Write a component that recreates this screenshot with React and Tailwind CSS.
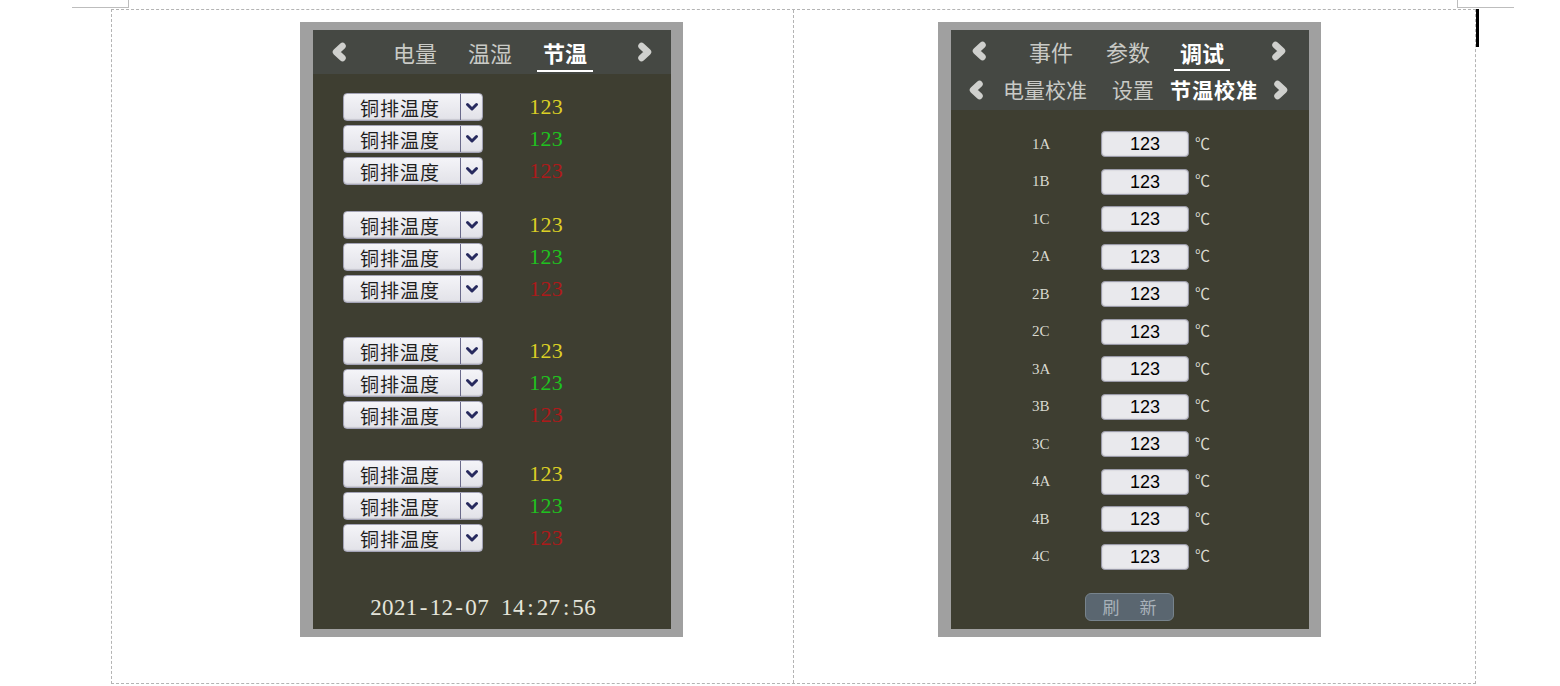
const cjk = { fontFamily: '"Noto Sans CJK SC", "Noto Sans", sans-serif' };
const serif = { fontFamily: '"Liberation Serif", "Noto Sans CJK SC", serif' };
const sans = { fontFamily: '"Liberation Sans", Arial, sans-serif' };

const Chevron = ({ dir = "left" }) => (
  <svg width="16" height="20" viewBox="0 0 16 20" className="shrink-0">
    <path
      d={dir === "left" ? "M11.5 4 L5 10 L11.5 16" : "M4.5 4 L11 10 L4.5 16"}
      fill="none"
      stroke="#cfd0cd"
      strokeWidth="6.5"
      strokeLinecap="round"
      strokeLinejoin="round"
    />
  </svg>
);

const DownArrow = () => (
  <svg width="14" height="10" viewBox="0 0 14 10">
    <path d="M2.5 2.5 L7 7 L11.5 2.5" fill="none" stroke="#272a5e" strokeWidth="3" strokeLinecap="round" strokeLinejoin="round" />
  </svg>
);

// fixed-width characters, like the half-width digits of the device font
const Mono = ({ text, w }) => (
  <span className="inline-flex">
    {text.split("").map((c, i) => (
      <span key={i} className="inline-block text-center" style={{ width: w }}>
        {c}
      </span>
    ))}
  </span>
);

const Dropdown = ({ value, color }) => (
  <div className="flex items-center h-[28px]">
    <div className="flex h-[28px] w-[140px] rounded-[4px] border border-[#a3a3b6] bg-gradient-to-b from-[#f4f4f8] to-[#e2e2e8] shadow-[inset_0_-1px_1px_#c8c8d0]">
      <div className="flex-1 flex items-center pl-[16px] text-[19px] leading-none text-[#1e1e1e] tracking-[1px]" style={cjk}>
        铜排温度
      </div>
      <div className="w-[22px] border-l border-[#6a6a8a] flex items-center justify-center">
        <DownArrow />
      </div>
    </div>
    <div className="ml-[46px] text-[22px] leading-none" style={{ ...serif, color }}>
      <Mono text={value} w="11.3px" />
    </div>
  </div>
);

const Group = ({ className = "" }) => (
  <div className={"flex flex-col gap-[4px] " + className}>
    <Dropdown value="123" color="#dccf25" />
    <Dropdown value="123" color="#1fc21f" />
    <Dropdown value="123" color="#ad1a1a" />
  </div>
);

const Panel = ({ children }) => (
  <div className="w-[383px] h-[615px] bg-[#a0a0a0] pl-[13px] pr-[12px] py-[8px]">
    <div className="w-[358px] h-[599px] bg-[#3e3e31] flex flex-col">{children}</div>
  </div>
);

const ActiveTab = ({ label, width, pt = "10px", gap = "6px" }) => (
  <div className="flex flex-col items-center h-full shrink-0" style={{ width, paddingTop: pt }}>
    <span className="text-[22px] leading-[24px] text-white font-bold" style={cjk}>
      {label}
    </span>
    <div className="w-full h-[2px] bg-white" style={{ marginTop: gap }} />
  </div>
);

const LeftPanel = () => (
  <Panel>
    <div className="h-[44px] bg-[#454843] flex items-stretch">
      <div className="flex items-center pl-[18px]">
        <Chevron dir="left" />
      </div>
      <div className="flex items-center ml-[46px] text-[22px] text-[#c9cac6]" style={cjk}>
        电量
      </div>
      <div className="flex items-center ml-[31px] text-[22px] text-[#c9cac6]" style={cjk}>
        温湿
      </div>
      <div className="ml-[25px]">
        <ActiveTab label="节温" width="56px" />
      </div>
      <div className="flex items-center ml-[44px]">
        <Chevron dir="right" />
      </div>
    </div>

    <div className="pl-[30px] pt-[19px]">
      <Group />
      <Group className="mt-[26px]" />
      <Group className="mt-[34px]" />
      <Group className="mt-[31px]" />
    </div>

    <div className="mt-auto pl-[57px] pb-[7px] text-[23px] leading-[28px] text-[#e4e4da]" style={serif}>
      <Mono text="2021-12-07 14:27:56" w="11.9px" />
    </div>
  </Panel>
);

const rows = ["1A", "1B", "1C", "2A", "2B", "2C", "3A", "3B", "3C", "4A", "4B", "4C"];

const RightPanel = () => (
  <Panel>
    <div className="h-[80px] bg-[#454843] flex flex-col">
      <div className="h-[42px] flex items-stretch">
        <div className="flex items-center pl-[20px]">
          <Chevron dir="left" />
        </div>
        <div className="flex items-center ml-[42px] text-[22px] text-[#c9cac6]" style={cjk}>
          事件
        </div>
        <div className="flex items-center ml-[33px] text-[22px] text-[#c9cac6]" style={cjk}>
          参数
        </div>
        <div className="ml-[24px]">
          <ActiveTab label="调试" width="56px" pt="10px" gap="5px" />
        </div>
        <div className="flex items-center ml-[41px]">
          <Chevron dir="right" />
        </div>
      </div>
      <div className="h-[38px] flex items-center pb-[2px]">
        <div className="pl-[17px]">
          <Chevron dir="left" />
        </div>
        <span className="ml-[19px] text-[21px] text-[#c9cac6]" style={cjk}>
          电量校准
        </span>
        <span className="ml-[25px] text-[21px] text-[#c9cac6]" style={cjk}>
          设置
        </span>
        <span className="ml-[16px] text-[21px] text-white font-bold tracking-[1px]" style={cjk}>
          节温校准
        </span>
        <div className="ml-[15px]">
          <Chevron dir="right" />
        </div>
      </div>
    </div>

    <div className="pt-[21px] flex flex-col gap-[11.5px]">
      {rows.map((r) => (
        <div key={r} className="flex items-center h-[26px]">
          <div className="w-[150px] pl-[81px] text-[15px] text-[#d9d9d0]" style={serif}>
            {r}
          </div>
          <div
            className="w-[88px] h-[26px] rounded-[4px] border border-[#9a9aa8] bg-[#e9e9ed] shadow-[inset_0_0_2px_#b8b8c4] flex items-center justify-center text-[18px] leading-none text-black"
            style={sans}
          >
            123
          </div>
          <div className="ml-[6px] text-[15px] text-[#d9d9d0]" style={serif}>
            ℃
          </div>
        </div>
      ))}
    </div>

    <div className="pl-[134px] mt-[23px]">
      <div className="w-[89px] h-[28px] rounded-[6px] border border-[#77838c] bg-[#5a6670] flex items-center justify-center gap-[20px] text-[17px] text-[#a9b2ba]" style={cjk}>
        <span>刷</span>
        <span>新</span>
      </div>
    </div>
  </Panel>
);

export default function App() {
  return (
    <div className="relative w-[1560px] h-[686px] bg-white overflow-hidden">
      {/* page corner marks */}
      <div className="absolute left-[72px] top-[7px] w-[57px] h-px bg-[#bdbdbd]" />
      <div className="absolute left-[128px] top-0 w-px h-[8px] bg-[#bdbdbd]" />
      <div className="absolute left-[1457px] top-[7px] w-[57px] h-px bg-[#bdbdbd]" />
      <div className="absolute left-[1457px] top-0 w-px h-[8px] bg-[#bdbdbd]" />
      {/* text cursor */}
      <div className="absolute left-[1476px] top-[9px] w-[3px] h-[38px] bg-black" />

      <div className="ml-[111px] mt-[9px] w-[1365px] h-[675px] border border-dashed border-[#b4b4b4] flex">
        <div className="w-[682px] h-full border-r border-dashed border-[#b4b4b4] pl-[188px] pt-[12px]">
          <LeftPanel />
        </div>
        <div className="flex-1 pl-[144px] pt-[12px]">
          <RightPanel />
        </div>
      </div>
    </div>
  );
}
